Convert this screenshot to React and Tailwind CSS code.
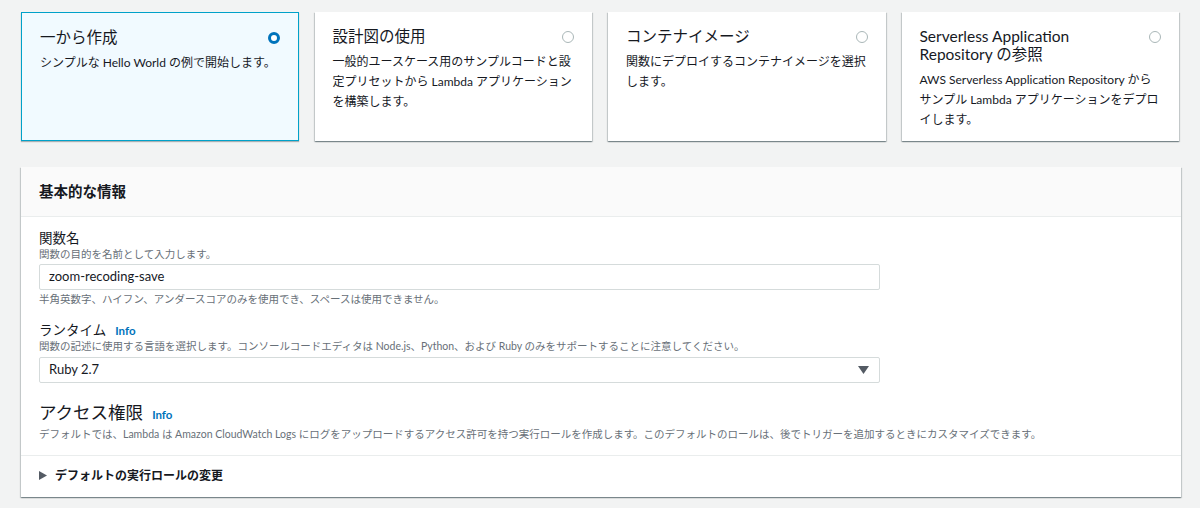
import React from 'react';

const font = { fontFamily: 'Lato, "Noto Sans CJK JP", sans-serif' };

const cards = [
  { title: '一から作成', desc: 'シンプルな Hello World の例で開始します。', selected: true },
  { title: '設計図の使用', desc: '一般的ユースケース用のサンプルコードと設定プリセットから Lambda アプリケーションを構築します。' },
  { title: 'コンテナイメージ', desc: '関数にデプロイするコンテナイメージを選択します。' },
  { title: 'Serverless Application Repository の参照', desc: 'AWS Serverless Application Repository からサンプル Lambda アプリケーションをデプロイします。' },
];

const Radio = ({ on }) =>
  on ? (
    <span className="mt-[4px] block w-[12px] h-[12px] shrink-0 rounded-full border-[3px] border-[#0073bb] bg-white"></span>
  ) : (
    <span className="mt-[4px] block w-[12px] h-[12px] shrink-0 rounded-full border border-[#aab7b8] bg-white"></span>
  );

const Info = () => <span className="ml-[9px] text-[11.5px] font-bold text-[#0073bb]">Info</span>;

export default function App() {
  return (
    <div className="w-[1200px] h-[508px] overflow-hidden bg-[#f2f3f3] text-[#16191f] px-[21px] pt-[12px]" style={font}>
      <div className="grid grid-cols-4 gap-[16px]">
        {cards.map((c, i) => (
          <div
            key={i}
            className={`h-[129px] pl-[18px] pr-[18px] pt-[15px] ${
              c.selected
                ? 'bg-[#f1faff] border border-[#00a1c9] shadow-[0_1px_1px_0_rgba(0,28,36,0.3)]'
                : 'bg-white shadow-[0_1px_1px_0_rgba(0,28,36,0.3),1px_1px_1px_0_rgba(0,28,36,0.15),-1px_1px_1px_0_rgba(0,28,36,0.15)]'
            }`}
          >
            <div className="flex justify-between gap-3">
              <div className="text-[15.5px] leading-[18px]">{c.title}</div>
              <Radio on={c.selected} />
            </div>
            <p className="mt-[7px] text-[12px] leading-[20px] text-[#16191f]">{c.desc}</p>
          </div>
        ))}
      </div>

      <div className="mt-[26px] w-[1160px] bg-white shadow-[0_1px_1px_0_rgba(0,28,36,0.3),1px_1px_1px_0_rgba(0,28,36,0.15),-1px_1px_1px_0_rgba(0,28,36,0.15)]">
        <div className="h-[50px] bg-[#fafafa] border-b border-[#eaeded] px-[18px] flex items-center">
          <h2 className="text-[14.5px] font-bold">基本的な情報</h2>
        </div>
        <div className="px-[18px] pt-[12px]">
          <div className="text-[13.5px] leading-[18px]">関数名</div>
          <div className="text-[10.5px] leading-[14px] text-[#687078]">関数の目的を名前として入力します。</div>
          <div className="mt-[3px] w-[841px] h-[26px] border border-[#d5dbdb] rounded-[2px] px-[9px] flex items-center text-[13px]">
            zoom-recoding-save
          </div>
          <div className="mt-[2px] text-[10.5px] leading-[14px] text-[#687078]">
            半角英数字、ハイフン、アンダースコアのみを使用でき、スペースは使用できません。
          </div>

          <div className="mt-[15px] text-[13.5px] leading-[18px] flex items-baseline">
            ランタイム<Info />
          </div>
          <div className="text-[10.5px] leading-[13px] text-[#687078]">
            関数の記述に使用する言語を選択します。コンソールコードエディタは Node.js、Python、および Ruby のみをサポートすることに注意してください。
          </div>
          <div className="mt-[4px] w-[841px] h-[26px] border border-[#d5dbdb] rounded-[2px] pl-[9px] pr-[10px] flex items-center justify-between text-[13px]">
            <span>Ruby 2.7</span>
            <svg width="11" height="8" viewBox="0 0 11 8"><path d="M0 0h11L5.5 8z" fill="#545b64" /></svg>
          </div>

          <div className="mt-[19px] text-[17.5px] leading-[22px] flex items-baseline">
            アクセス権限<Info />
          </div>
          <div className="mt-[1px] text-[10.5px] leading-[14px] text-[#687078]">
            デフォルトでは、Lambda は Amazon CloudWatch Logs にログをアップロードするアクセス許可を持つ実行ロールを作成します。このデフォルトのロールは、後でトリガーを追加するときにカスタマイズできます。
          </div>
        </div>
        <div className="mt-[14px] border-t border-[#eaeded] px-[18px] h-[42px] pb-[2px] flex items-center text-[12px] font-bold">
          <svg width="8" height="9" viewBox="0 0 8 9" className="mr-[8px]"><path d="M0 0l8 4.5L0 9z" fill="#545b64" /></svg>
          デフォルトの実行ロールの変更
        </div>
      </div>
    </div>
  );
}
